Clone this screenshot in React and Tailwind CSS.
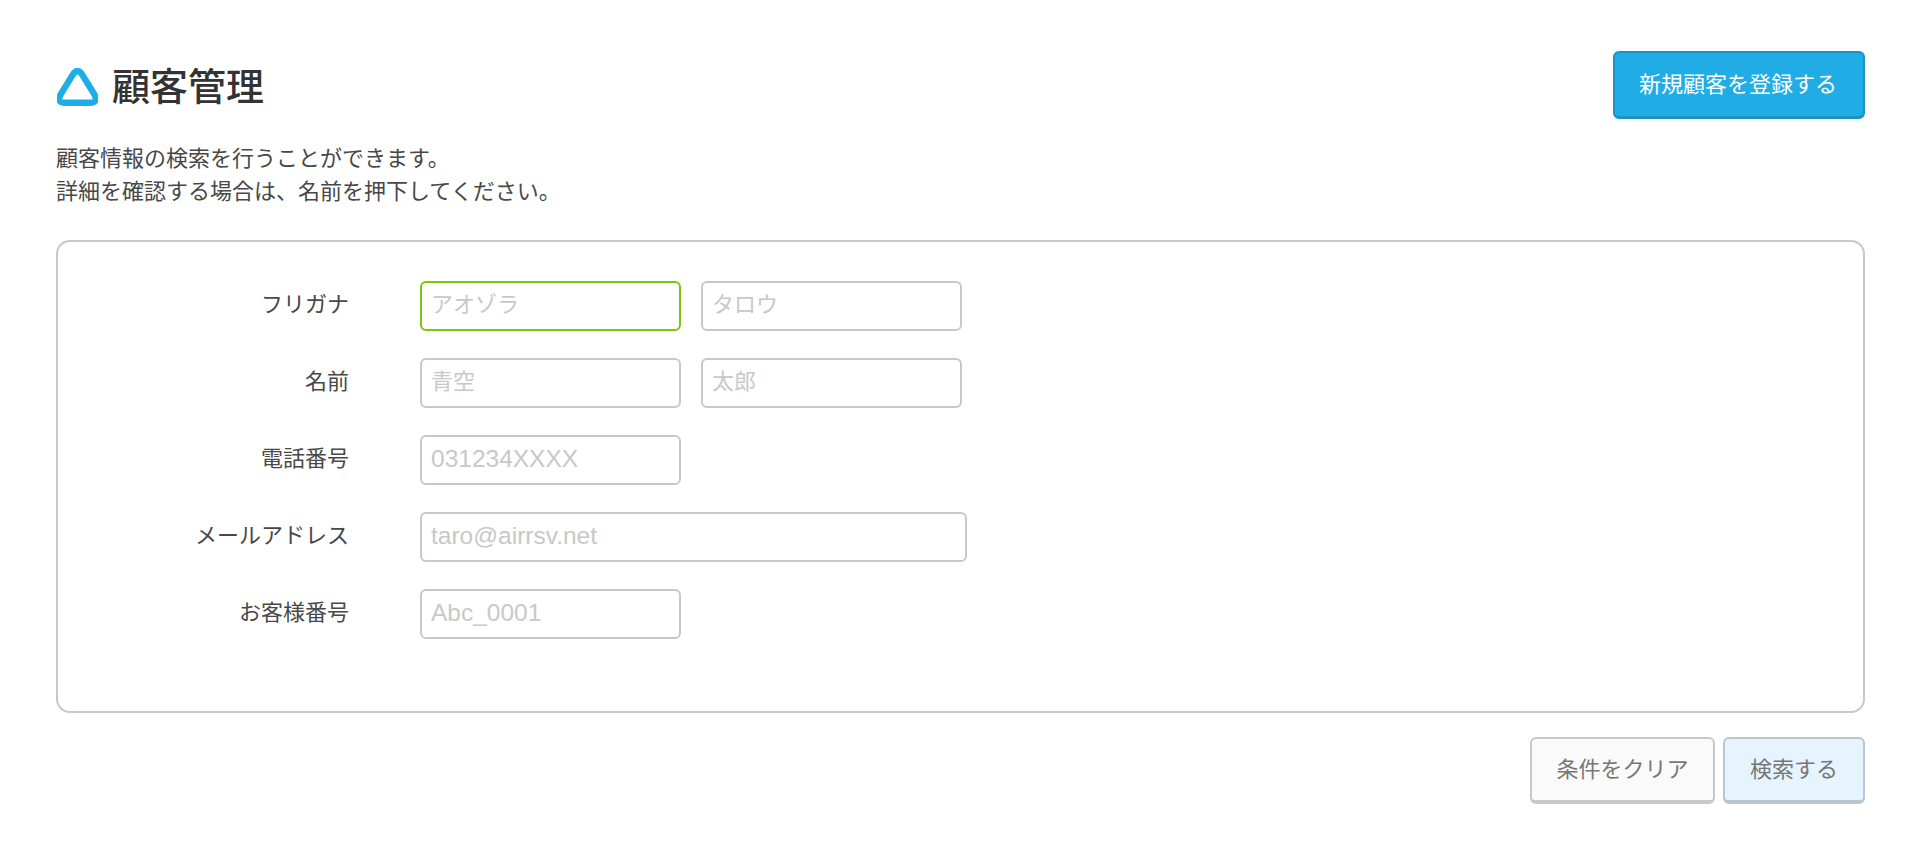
const rows = [
  { label: 'フリガナ', fields: [{ ph: 'アオゾラ', focus: true }, { ph: 'タロウ' }] },
  { label: '名前', fields: [{ ph: '青空' }, { ph: '太郎' }] },
  { label: '電話番号', fields: [{ ph: '031234XXXX', latin: true }] },
  { label: 'メールアドレス', fields: [{ ph: 'taro@airrsv.net', wide: true, latin: true }] },
  { label: 'お客様番号', fields: [{ ph: 'Abc_0001', latin: true }] },
];

function Field({ ph, focus, wide, latin }) {
  return (
    <input
      type="text"
      placeholder={ph}
      className={`h-[50px] rounded-[6px] border-2 bg-white px-[9px] pb-[2px] outline-none placeholder:text-[#c8c8c8] ${
        latin ? 'text-[24.5px]' : 'text-[22px]'
      } ${wide ? 'w-[547px]' : 'w-[261px]'} ${focus ? 'border-[#7ac70c]' : 'border-[#c8c8c8]'}`}
    />
  );
}

export default function App() {
  return (
    <div className="min-h-[850px] bg-white pl-14 pr-[55px] pt-[51px] text-[22px] text-[#484848] font-['Liberation_Sans','Noto_Sans_CJK_JP',sans-serif]">
      <div className="flex items-start justify-between">
        <div className="flex h-[68px] items-center gap-[14px] pl-px pt-[3px]">
          <svg width="41" height="38" viewBox="0 0 41 38" fill="none" className="shrink-0">
            <path
              d="M15.5 7.1 L3.5 26.7 Q-0.5 34.8 8 34.8 L33 34.8 Q41.5 34.8 37.5 26.7 L25.5 7.1 Q20.5 -1 15.5 7.1 Z"
              stroke="#1eaee6"
              strokeWidth="6.4"
              strokeLinejoin="round"
            />
          </svg>
          <h1 className="text-[38px] font-medium leading-none text-[#333]">顧客管理</h1>
        </div>
        <button className="h-[68px] w-[252px] rounded-[6px] border-2 border-b-[3px] border-[#1a93c4] bg-[#20ade6] pr-[2px] text-[22px] text-white">
          新規顧客を登録する
        </button>
      </div>

      <p className="mt-[23px] leading-[33px]">
        顧客情報の検索を行うことができます。
        <br />
        詳細を確認する場合は、名前を押下してください。
      </p>

      <div className="mt-[32px] flex h-[473px] flex-col gap-[27px] rounded-[14px] border-2 border-[#c8c8c8] pt-[39px]">
        {rows.map((row) => (
          <div key={row.label} className="flex items-center">
            <label className="w-[291px] pb-[4px] text-right">{row.label}</label>
            <div className="ml-[71px] flex gap-[20px]">
              {row.fields.map((f) => (
                <Field key={f.ph} {...f} />
              ))}
            </div>
          </div>
        ))}
      </div>

      <div className="mt-[24px] flex justify-end gap-2">
        <button className="h-[67px] w-[185px] rounded-[6px] border-2 border-b-[4px] border-[#c8c8c8] bg-[#fafafa] text-[22px] text-[#777]">
          条件をクリア
        </button>
        <button className="h-[67px] w-[142px] rounded-[6px] border-2 border-b-[4px] border-[#b9c6d0] bg-[#e5f4ff] text-[22px] text-[#777]">
          検索する
        </button>
      </div>
    </div>
  );
}
